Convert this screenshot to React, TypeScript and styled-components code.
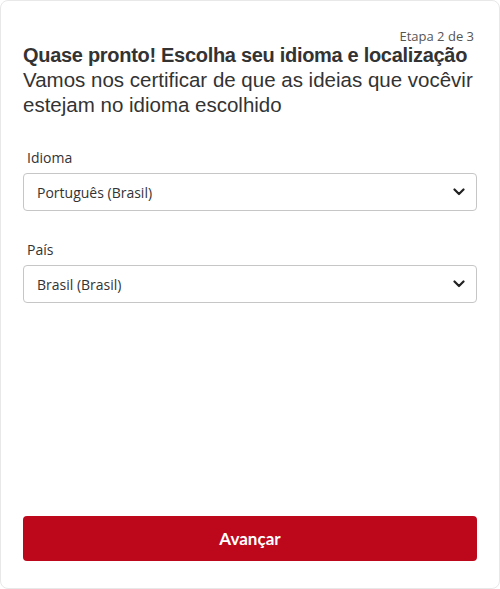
import React from "react";
import styled, { createGlobalStyle } from "styled-components";

const GlobalStyle = createGlobalStyle`
  html, body {
    margin: 0;
    padding: 0;
    background: #ffffff;
  }
  * {
    box-sizing: border-box;
  }
`;

const Card = styled.div`
  width: 500px;
  height: 589px;
  display: flex;
  flex-direction: column;
  padding: 28px 22px 27px 22px;
  background: #ffffff;
  border: 1px solid #e8e8e8;
  border-radius: 8px;
`;

const Step = styled.div`
  font-family: "Open Sans", sans-serif;
  font-size: 13px;
  line-height: 15px;
  color: #555555;
  text-align: right;
  padding-right: 3px;
`;

const Title = styled.h1`
  margin: 0;
  font-family: "Liberation Sans", Arial, sans-serif;
  font-weight: 700;
  font-size: 20px;
  line-height: 23px;
  color: #333333;
  letter-spacing: -0.3px;
`;

const Subtitle = styled.p`
  margin: 0;
  font-family: "Liberation Sans", Arial, sans-serif;
  font-size: 20.5px;
  line-height: 25px;
  color: #333333;
`;

const Field = styled.div<{ $first?: boolean }>`
  display: flex;
  flex-direction: column;
  gap: 5px;
  margin-top: ${(p) => (p.$first ? "31px" : "29px")};
`;

const Label = styled.label`
  font-family: "Open Sans", sans-serif;
  font-size: 14px;
  line-height: 20px;
  color: #333333;
  padding-left: 4px;
`;

const SelectBox = styled.div`
  height: 38px;
  display: flex;
  align-items: center;
  justify-content: space-between;
  padding: 0 11px 0 13px;
  border: 1px solid #c6c6c6;
  border-radius: 4px;
  font-family: "Open Sans", sans-serif;
  font-size: 14px;
  color: #333333;
`;

const Spacer = styled.div`
  flex: 1;
`;

const Button = styled.button`
  height: 45px;
  width: 100%;
  border: none;
  border-radius: 4px;
  background: #bd081c;
  color: #ffffff;
  font-family: Lato, "Open Sans", sans-serif;
  font-weight: 700;
  font-size: 17px;
  cursor: pointer;
`;

function Chevron(): JSX.Element {
  return (
    <svg width="12" height="8" viewBox="0 0 12 8" fill="none">
      <path d="M1.5 1.5 L6 6 L10.5 1.5" stroke="#222" strokeWidth="2.2" strokeLinecap="round" strokeLinejoin="round" />
    </svg>
  );
}

interface SelectFieldProps {
  label: string;
  value: string;
  first?: boolean;
}

function SelectField(props: SelectFieldProps): JSX.Element {
  return (
    <Field $first={props.first}>
      <Label>{props.label}</Label>
      <SelectBox>
        <span>{props.value}</span>
        <Chevron />
      </SelectBox>
    </Field>
  );
}

export default function App(): JSX.Element {
  return (
    <>
      <GlobalStyle />
      <Card>
        <Step>Etapa 2 de 3</Step>
        <Title>Quase pronto! Escolha seu idioma e localização</Title>
        <Subtitle>Vamos nos certificar de que as ideias que vocêvir estejam no idioma escolhido</Subtitle>
        <SelectField label="Idioma" value="Português (Brasil)" first />
        <SelectField label="País" value="Brasil (Brasil)" />
        <Spacer />
        <Button>Avançar</Button>
      </Card>
    </>
  );
}
